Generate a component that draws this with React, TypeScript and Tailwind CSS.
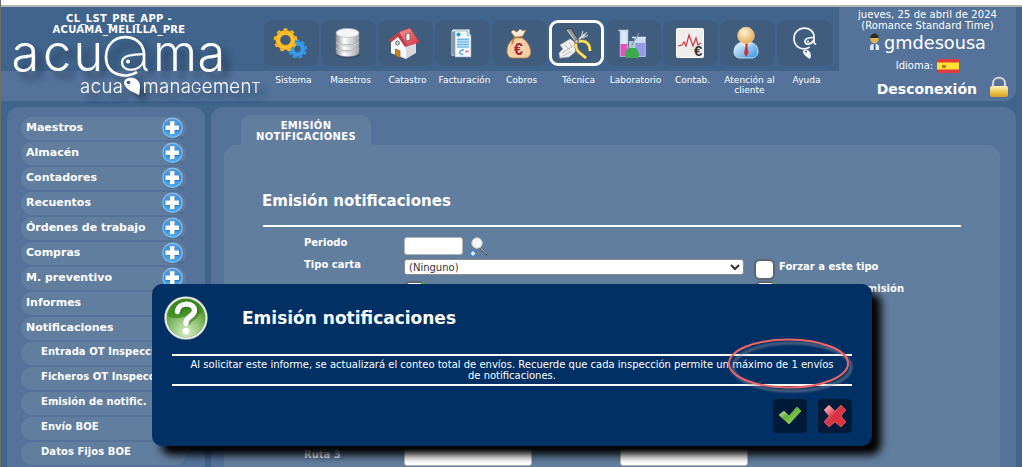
import React from 'react';

type IconProps = { children: React.ReactNode };

const Icon = ({ children }: IconProps) => (
  <svg width="36" height="36" viewBox="0 0 36 36" fill="none" className="mr-[3px] shrink-0">
    {children}
  </svg>
);

const Defs = () => (
  <svg width="0" height="0" className="absolute">
    <defs>
      <linearGradient id="metal" x1="0" x2="1">
        <stop offset="0" stopColor="#8d8f98" />
        <stop offset=".35" stopColor="#fff" />
        <stop offset="1" stopColor="#a3a4ab" />
      </linearGradient>
      <linearGradient id="redRoof" x1="0" y1="0" x2="1" y2="1">
        <stop offset="0" stopColor="#f39a9a" />
        <stop offset="1" stopColor="#d22f3e" />
      </linearGradient>
      <linearGradient id="shirt" x1="0" y1="0" x2="1" y2="1">
        <stop offset="0" stopColor="#f4fbff" />
        <stop offset="1" stopColor="#2f8fe0" />
      </linearGradient>
      <radialGradient id="skin" cx=".4" cy=".3" r=".7">
        <stop offset="0" stopColor="#fff3d6" />
        <stop offset="1" stopColor="#e3ac55" />
      </radialGradient>
      <linearGradient id="plus" x1="0" y1="0" x2="0" y2="1">
        <stop offset="0" stopColor="#5c9fdb" />
        <stop offset=".5" stopColor="#2f8ce0" />
        <stop offset="1" stopColor="#45b4ff" />
      </linearGradient>
      <radialGradient id="greenBall" cx=".5" cy=".85" r=".75">
        <stop offset="0" stopColor="#d8f0c8" />
        <stop offset=".55" stopColor="#86bb68" />
        <stop offset="1" stopColor="#3d8a20" />
      </radialGradient>
      <linearGradient id="check" x1="0" y1="0" x2="1" y2="1">
        <stop offset="0" stopColor="#f2fbe9" />
        <stop offset=".45" stopColor="#5eb13c" />
        <stop offset="1" stopColor="#c2ee62" />
      </linearGradient>
      <linearGradient id="cross" x1="0" y1="0" x2="1" y2="1">
        <stop offset="0" stopColor="#ffd5d8" />
        <stop offset=".45" stopColor="#d53546" />
        <stop offset="1" stopColor="#e8323c" />
      </linearGradient>
      <linearGradient id="gold" x1="0" y1="0" x2="0" y2="1">
        <stop offset="0" stopColor="#fff4c0" />
        <stop offset=".5" stopColor="#efca55" />
        <stop offset="1" stopColor="#d99d20" />
      </linearGradient>
    </defs>
  </svg>
);

const gearTeeth = [0, 40, 80, 120, 160, 200, 240, 280, 320];

const Gear = ({ cx, cy, r, color, edge }: { cx: number; cy: number; r: number; color: string; edge: string }) => (
  <g>
    {gearTeeth.map((a) => (
      <rect key={a} x={cx - 1.9} y={cy - r - 2.2} width="3.8" height="4" fill={color} transform={`rotate(${a} ${cx} ${cy})`} />
    ))}
    <circle cx={cx} cy={cy} r={r - 1.8} stroke={edge} strokeWidth="5" />
    <circle cx={cx} cy={cy} r={r - 1.8} stroke={color} strokeWidth="4" />
  </g>
);

const Sistema = () => (
  <Icon>
    <Gear cx={25.5} cy={24} r={7.2} color="#3b9be6" edge="#2577bd" />
    <Gear cx={13.5} cy={15} r={9.4} color="#fbc02a" edge="#d58f12" />
  </Icon>
);

const Maestros = () => (
  <Icon>
    <ellipse cx="19" cy="30" rx="12" ry="3" fill="#20354f" opacity=".5" />
    {[25, 19, 13].map((y) => (
      <g key={y}>
        <path d={`M7 ${y - 2}v4.500c0 5.500 23 5.500 23 0v-4.500z`} fill="url(#metal)" stroke="#85878f" strokeWidth=".5" />
        <ellipse cx="18.500" cy={y - 2} rx="11.500" ry="4" fill="#e6e6ea" stroke="#a5a6ae" strokeWidth=".4" />
      </g>
    ))}
    <path d="M7 8v5c0 5.500 23 5.500 23 0V8z" fill="url(#metal)" />
    <ellipse cx="18.500" cy="8" rx="11.500" ry="4.500" fill="#f5f5f7" stroke="#b5b6bd" strokeWidth=".7" />
  </Icon>
);

const Catastro = () => (
  <Icon>
    <path d="M5 17l9-8 6 11v14L5 28z" fill="#fafafa" />
    <path d="M20 20l10-2v10l-10 6z" fill="#d9d9dc" />
    <path d="M3 14.500L13 7l9 14-3 1-7-10-8 6z" fill="#b8424c" />
    <path d="M13 7l11-4 9.500 14L21 21z" fill="url(#redRoof)" stroke="#c12e3d" strokeWidth=".6" />
    <path d="M20 9l4-1v7l-4 1z" fill="#f3f3f3" stroke="#6b5151" strokeWidth=".7" />
    <circle cx="11.500" cy="18" r="2" fill="#bcd8ea" stroke="#555" strokeWidth=".8" />
    <path d="M9.500 24l4.500 2v7l-4.500-2.500z" fill="#c78925" stroke="#7b5316" strokeWidth=".7" />
  </Icon>
);

const Facturacion = () => (
  <Icon>
    <path d="M8 6l2-2h17v25l-2 2H8z" fill="#dce8ee" stroke="#445e70" strokeWidth=".8" />
    <path d="M8.500 6.500h5V32L8.500 29z" fill="#8299a8" />
    <path d="M12 6h12l4 4v22H12z" fill="#f4faff" stroke="#87a5b8" strokeWidth=".6" />
    <path d="M24 6v4.500h4" fill="#cfe3ef" stroke="#7fa5bd" strokeWidth=".6" />
    <path d="M14 13h12v10H14z" fill="#b4dcf3" />
    <circle cx="15.500" cy="9.500" r="2" fill="#1b9bdc" />
    <path d="M14 14.500h12M14 17h12M14 19.500h12M14 22h12" stroke="#6db9e4" strokeWidth="1" />
    <path d="M21 25c-5-1-6 5-1 4.500" stroke="#3ba8e0" strokeWidth="1.300" />
    <path d="M22 27l4-1" stroke="#e34848" strokeWidth="1" />
  </Icon>
);

const Cobros = () => (
  <Icon>
    <path d="M15 13C6 17 4 32 12 33h14c8-1 5-15-4-20z" fill="#f5cfa6" stroke="#bb7e4c" strokeWidth=".8" />
    <path d="M15 12l-4-5 2-2 4 2 3-3 3 2 3-1-4 7z" fill="#fbe9d6" stroke="#bb7e4c" strokeWidth=".6" />
    <path d="M13.500 13l9-1.500M14 13l-2 6" stroke="#b6813c" strokeWidth="1.600" />
    <text x="14" y="30" fontSize="16" fontWeight="bold" fill="#a82337" fontFamily="Liberation Sans, sans-serif">€</text>
  </Icon>
);

const Tecnica = () => (
  <Icon>
    <path d="M28 9L11 24" stroke="#dcdcdc" strokeWidth="1.800" />
    <path d="M24 13l2-7M25 13l5-6M26 13l5-3" stroke="#cdcdcd" strokeWidth="1.100" />
    <path d="M9 4l5-.5 8 12-3 3z" fill="#8f9296" stroke="#30343a" strokeWidth=".8" />
    <path d="M10 5l9 12" stroke="#e4e4e4" strokeWidth="1" />
    <path d="M3 20l10-6 6 4-1 9-6 5-9 1-1-5 4-4z" fill="#f0f0f0" stroke="#b5b5b5" strokeWidth=".7" />
    <path d="M5 28l11-7M6 31l9-5M8 20l5 5M12 17l3 5" stroke="#b9b9b9" strokeWidth=".9" />
    <path d="M20 17c6-2 13-1 13 9M19 18c-1 8 3 9 10 15" stroke="#b8921c" strokeWidth="3.400" />
    <path d="M20 17c6-2 13-1 13 9M19 18c-1 8 3 9 10 15" stroke="#ffe56b" strokeWidth="2.200" />
    <circle cx="19.500" cy="16.500" r="2" fill="#bdbdbd" stroke="#555" strokeWidth=".8" />
  </Icon>
);

const Laboratorio = () => (
  <Icon>
    <path d="M4.500 5.500h10M6.500 6v25h7V6" fill="#dce6f7" stroke="#c2d5ef" strokeWidth="1.400" />
    <path d="M6.500 19h7v12h-7z" fill="#e653b8" />
    <path d="M18 12.500h14M21 13v18h10V13" fill="#c8d8f6" stroke="#d5e2f6" strokeWidth="1.300" />
    <path d="M21 18h10v13H21z" fill="#9599e8" />
    <path d="M15 16h6v6l4 6c1 3-1 5-4 5h-6c-3 0-5-2-4-5l4-6z" fill="#c5e6da" opacity=".8" />
    <path d="M14 23h8l3 5c1 3-1 5-4 5h-6c-3 0-5-2-4-5z" fill="#3ba94e" />
    <path d="M18 20l7-12" stroke="#849bb2" strokeWidth="1.200" />
  </Icon>
);

const Contab = () => (
  <Icon>
    <rect x="5.500" y="3.500" width="27" height="29" rx="1" fill="#eeeeed" stroke="#fff" />
    <path d="M7 21l4-1 2-3 2 4 3-11 4 11 3-8 2 7 3-2" stroke="#cf3a47" strokeWidth="1.200" />
    <text x="23" y="31" fontSize="15" fontWeight="bold" fill="#343434" fontFamily="Liberation Sans, sans-serif">€</text>
  </Icon>
);

const Atencion = () => (
  <Icon>
    <path d="M6 27c0-7 4-10 12-10s12 3 12 10c0 3-3 6-6 6H12c-4 0-6-3-6-6z" fill="url(#shirt)" stroke="#d9f0ff" strokeWidth=".8" />
    <path d="M13 18h10l-5 5z" fill="#f7fbff" />
    <path d="M16.500 18h4l-1 3 1 7-2.500 4-2-4 1.500-7z" fill="#cf3035" />
    <circle cx="18" cy="10.500" r="8.300" fill="url(#skin)" stroke="#efcf91" strokeWidth=".8" />
  </Icon>
);

const Ayuda = () => (
  <Icon>
    <g stroke="#f7f8fa" strokeWidth="1.700" strokeLinecap="round">
      <path d="M24 22.500C17 26 9 22 9 13.500 9 0 29 0 29 12v4c0 2 .5 3 1.500 3" />
      <path d="M28.500 12.500c-4 0-8.500.5-8.500 4s5.500 4 8.500-1" />
    </g>
    <path d="M18 26c2-3 8-1 8 5l-1 3c-3-2-7-4-7-8z" fill="#f7f8fa" />
    <circle cx="21" cy="26.500" r="1" fill="#425f7f" />
    <circle cx="23" cy="16.500" r="1.100" fill="#f7f8fa" />
  </Icon>
);

const navItems = [
  { label: 'Sistema', icon: <Sistema /> },
  { label: 'Maestros', icon: <Maestros /> },
  { label: 'Catastro', icon: <Catastro /> },
  { label: 'Facturación', icon: <Facturacion /> },
  { label: 'Cobros', icon: <Cobros /> },
  { label: 'Técnica', icon: <Tecnica />, active: true },
  { label: 'Laboratorio', icon: <Laboratorio /> },
  { label: 'Contab.', icon: <Contab /> },
  { label: 'Atención al cliente', icon: <Atencion /> },
  { label: 'Ayuda', icon: <Ayuda /> },
];

const Logo = () => (
  <svg width="263" height="68" viewBox="0 0 263 68" className="block overflow-visible">
    <defs>
      <filter id="logoShadow" x="-10%" y="-10%" width="125%" height="140%">
        <feDropShadow dx="7" dy="7" stdDeviation="3" floodColor="#1c2f48" floodOpacity=".65" />
      </filter>
    </defs>
    <g filter="url(#logoShadow)" fill="#fff" fontFamily="Inter, sans-serif" fontWeight="300">
      <text x="10.500 42 72.500" y="35" fontSize="50.500">acu</text>
      <text x="152 196.500" y="35" fontSize="50.500">ma</text>
      <path d="M136 36c-10 7-31 4-31-15 0-26 37-26 38-3v10c0 4 1 6 3.500 6" fill="none" stroke="#fff" strokeWidth="2.600" />
      <path d="M143 18c-8 1-22 0-22 8.500 0 10 18 10 22-2" fill="none" stroke="#fff" strokeWidth="2.200" />
      <circle cx="127" cy="25.500" r="2" />
      <text x="79" y="57" fontSize="18.500" textLength="43">acua</text>
      <path d="M123 47c0-7 16-8 16 4l-1 8c-4-3-13-4-15-12z" />
      <circle cx="127.500" cy="46.500" r="1.800" fill="#3c5b82" />
      <text x="141.500" y="57" fontSize="18.500" textLength="118">
        mana<tspan fontSize="14">G</tspan>emen<tspan fontSize="14">T</tspan>
      </text>
    </g>
  </svg>
);

const Header = () => (
  <header className="flex h-[94px] shrink-0">
    <div className="flex w-[838px] shrink-0 bg-[linear-gradient(#40648c_64px,#54729a_64px)]">
      <div className="w-[263px] shrink-0 pt-[6px]">
        <p className="h-[23px] w-[236px] text-center text-[10px] leading-[11px] font-bold tracking-[0.3px]">
          CL_LST_PRE_APP -<br />ACUAMA_MELILLA_PRE
        </p>
        <Logo />
      </div>
      <nav className="flex gap-[2px] pt-[13px]">
        {navItems.map((item) => (
          <a key={item.label} className="flex w-[55px] flex-col items-center">
            <span
              className={
                item.active
                  ? 'flex h-[46px] w-[55px] items-center justify-center rounded-[9px] border-[3px] border-white bg-[#405d7e]'
                  : 'flex h-[46px] w-[55px] items-center justify-center rounded-[9px] bg-[#405d7e]'
              }
            >
              {item.icon}
            </span>
            <span className="mt-[9px] ml-[4px] w-[60px] text-center text-[9px] leading-[10px]">{item.label}</span>
          </a>
        ))}
      </nav>
    </div>
    <div className="flex w-[177px] flex-col items-center rounded-br-[12px] bg-[#54729a] pt-[2px]">
      <p className="text-center text-[10px] leading-[11px] tracking-[0.08px] whitespace-nowrap">
        jueves, 25 de abril de 2024<br />(Romance Standard Time)
      </p>
      <div className="flex h-[24px] items-center gap-[4px]">
        <svg width="11" height="18" viewBox="0 0 11 18" className="mb-[3px]">
          <circle cx="5.500" cy="6" r="4.200" fill="#e2b64c" />
          <path d="M1.200 5c0-6 8.600-6 8.600 0z" fill="#302c28" />
          <path d="M1 17v-4c1-3 8-3 9 0v4z" fill="#d9e8f4" />
          <path d="M4.800 11h1.600v6H4.800z" fill="#294c70" />
        </svg>
        <span className="text-[17.700px] leading-[22px]">gmdesousa</span>
      </div>
      <div className="mt-[4px] flex h-[14px] items-center gap-[4px]">
        <span className="text-[10px] leading-[14px]">Idioma:</span>
        <svg width="22" height="14" viewBox="0 0 22 14">
          <path d="M0 0h22v14H0z" fill="#e23a3c" />
          <path d="M0 3.500h22v7H0z" fill="#ffe22d" />
          <path d="M5 6h4v3H5z" fill="#c5703c" />
        </svg>
      </div>
      <div className="mt-[2px] flex h-[24px] w-full items-center justify-end gap-[12px] pr-[7px]">
        <span className="pt-[4px] text-[14px] leading-[18px] font-bold">Desconexión</span>
        <svg width="20" height="22" viewBox="0 0 20 22" className="mb-[1px]">
          <path d="M4 12V7C4 0 16 0 16 7v5" fill="none" stroke="#7e8895" strokeWidth="3" />
          <path d="M4 12V7C4 0 16 0 16 7v5" fill="none" stroke="#dfe3e8" strokeWidth="1.600" />
          <rect x="1" y="10" width="18" height="11" rx="2" fill="url(#gold)" />
        </svg>
      </div>
    </div>
  </header>
);

const PlusIcon = () => (
  <svg width="23" height="23" viewBox="0 0 23 23" className="mr-[2px]">
    <path d="M5 19h17v3H8z" fill="#3d5878" opacity=".35" />
    <circle cx="11.500" cy="10.800" r="9.700" fill="url(#plus)" stroke="#8cbde9" strokeWidth="1.200" />
    <path d="M10 6h4v4h4v4h-4v4h-4v-4H6v-4h4z" fill="#24496e" opacity=".45" />
    <path d="M9 4.300h4.500v4.200H18V13h-4.500v4.200H9V13H4.500V8.500H9z" fill="#fff" />
  </svg>
);

const menu = ['Maestros', 'Almacén', 'Contadores', 'Recuentos', 'Órdenes de trabajo', 'Compras', 'M. preventivo', 'Informes', 'Notificaciones'];
const submenu = ['Entrada OT Inspecciones', 'Ficheros OT Inspecciones', 'Emisión de notific.', 'Envío BOE', 'Datos Fijos BOE'];

const Sidebar = () => (
  <aside className="flex w-[198px] shrink-0 flex-col gap-[2px] rounded-t-[12px] bg-[#54729a] pt-[10px] pl-[14px]">
    {menu.map((label) => (
      <div key={label} className="flex h-[23px] w-[165px] shrink-0 justify-between rounded-[11px] bg-[#627e9e] pl-[5px]">
        <span className="text-[11px] leading-[21px] font-bold whitespace-nowrap">{label}</span>
        <PlusIcon />
      </div>
    ))}
    {submenu.map((label) => (
      <div key={label} className="h-[23px] w-[165px] shrink-0 overflow-hidden rounded-[11px] bg-[#627e9e] pl-[20px] text-[10px] leading-[19px] font-bold tracking-[0.05px] whitespace-nowrap">
        {label}
      </div>
    ))}
  </aside>
);

const CheckedBox = () => (
  <span className="flex h-[21px] w-[21px] items-center justify-center rounded-[6px] border-2 border-[#5b6571] bg-white">
    <svg width="17" height="17" viewBox="0 0 17 17" className="overflow-visible">
      <path d="M4 9l4 5L18-1" fill="none" stroke="#3fbf3f" strokeWidth="2" />
    </svg>
  </span>
);

const Content = () => (
  <main className="flex w-[805px] shrink-0 flex-col rounded-t-[12px] bg-[#54729a] pt-[8px] pl-[13px]">
    <div className="ml-[17px] h-[30px] w-[130px] shrink-0 rounded-t-[10px] bg-[#627e9e] pt-[5px] text-center text-[10px] leading-[11px] font-bold tracking-[0.35px]">
      EMISIÓN<br />NOTIFICACIONES
    </div>
    <section className="flex h-[330px] w-[776px] shrink-0 flex-col rounded-t-[12px] bg-[#627e9e] pt-[46px] pl-[38px]">
      <h1 className="h-[34px] w-[699px] shrink-0 text-[15px] leading-[21px] font-bold">Emisión notificaciones</h1>
      <div className="ml-px h-[2px] w-[698px] shrink-0 bg-white" />
      <div className="flex h-[30px] shrink-0 pt-[10px] pl-[42px] text-[10px] font-bold">
        <span className="w-[100px] leading-[12px]">Periodo</span>
        <span className="h-[18px] w-[59px] rounded-[3px] border border-[#b6b6b6] bg-white" />
        <svg width="20" height="20" viewBox="0 0 20 20" className="ml-[6px]">
          <path d="M11 10l7 8" stroke="#4d5258" strokeWidth="2.200" />
          <path d="M11 10l6.500 7" stroke="#c4c6ca" strokeWidth="1" />
          <circle cx="8" cy="6" r="5.200" fill="#f6f6f6" stroke="#c9cdd2" />
          <circle cx="4" cy="16.500" r="3" fill="#3f8bd0" />
          <path d="M4 14.500v4M2 16.500h4" stroke="#fff" strokeWidth="1.500" />
        </svg>
      </div>
      <div className="flex h-[22px] shrink-0 pt-[2px] pl-[42px] text-[10px] font-bold">
        <span className="w-[100px] leading-[12px]">Tipo carta</span>
        <span className="flex h-[16px] w-[340px] items-center justify-between rounded-[3px] border border-[#8a8a8a] bg-white pr-[3px] pl-[4px] font-normal text-[#333]">
          (Ninguno)
          <svg width="10" height="7" viewBox="0 0 10 7">
            <path d="M1 1l4 4 4-4" fill="none" stroke="#333" strokeWidth="2" />
          </svg>
        </span>
        <span className="ml-[10px] h-[21px] w-[21px] rounded-[6px] border-2 border-[#5b6571] bg-white" />
        <span className="pl-[4px] leading-[16px]">Forzar a este tipo</span>
      </div>
      <div className="flex h-[23px] shrink-0 pt-[2px] pl-[142px]">
        <CheckedBox />
        <span className="w-[330px]" />
        <CheckedBox />
        <span className="w-[128px] text-right text-[10px] leading-[16px] font-bold">emisión</span>
      </div>
      <div className="mt-[147px] flex h-[20px] shrink-0 pl-[42px]">
        <span className="w-[100px] text-[10px] leading-[12px] font-bold">Ruta 3</span>
        <span className="h-[17px] w-[128px] rounded-[3px] border border-[#b6b6b6] bg-white" />
        <span className="ml-[88px] h-[17px] w-[128px] rounded-[3px] border border-[#b6b6b6] bg-white" />
      </div>
    </section>
  </main>
);

const Dialog = () => (
  <div className="absolute top-[284px] left-[151px] h-[162px] w-[720px] rounded-[10px] bg-[#003064] px-[20px] shadow-[9px_9px_9px_#000]">
    <div className="-ml-[8px] flex h-[70px] items-center pb-[2px]">
      <svg width="44" height="44" viewBox="0 0 44 44">
        <circle cx="22" cy="22" r="20.500" fill="url(#greenBall)" stroke="#8e9c8d" strokeWidth="2.500" />
        <circle cx="22" cy="22" r="20.400" fill="none" stroke="#e8ece8" strokeWidth="1.800" />
        <path d="M4 20C6 7 18 3 29 6c9 3 10 9 7 12-10-1-22 8-32 2z" fill="#2f8414" opacity=".7" />
        <path d="M14 17c0-11 17-10 17-1 0 6-9 5-8.500 12" fill="none" stroke="#31621f" strokeWidth="5.500" opacity=".5" transform="translate(1 1)" />
        <path d="M13.500 15.500c1-10 17-9.500 17-1 0 6-9 5.500-8.500 13" fill="none" stroke="#fff" strokeWidth="5.300" strokeLinecap="round" />
        <circle cx="22" cy="35" r="3.300" fill="#fff" />
      </svg>
      <h2 className="ml-[34px] text-[17px] leading-[20px] font-bold">Emisión notificaciones</h2>
    </div>
    <p className="h-[32px] border-y-2 border-white pt-[3px] text-center text-[10px] leading-[11px] whitespace-nowrap">
      Al solicitar este informe, se actualizará el conteo total de envíos. Recuerde que cada inspección permite un máximo de 1 envíos<br />
      de notificaciones.
    </p>
    <div className="mt-[13px] flex justify-end gap-[11px]">
      <button className="flex h-[34px] w-[34px] items-center justify-center rounded-[4px] bg-[#001b3a]">
        <svg width="24" height="22" viewBox="0 0 24 22">
          <path d="M1 10l5-4 5 5 8-9 4 4-12 13z" fill="url(#check)" stroke="#93c66c" strokeWidth=".7" />
        </svg>
      </button>
      <button className="flex h-[34px] w-[34px] items-center justify-center rounded-[4px] bg-[#001b3a]">
        <svg width="24" height="24" viewBox="0 0 24 24">
          <path d="M6 1l6 6 6-6 5 5-5 6 5 6-5 5-6-5-6 5-5-5 5-6-5-6z" fill="url(#cross)" stroke="#d96670" strokeWidth=".7" />
        </svg>
      </button>
    </div>
    <svg width="130" height="62" viewBox="0 0 130 62" className="absolute top-[50px] left-[572px]">
      <ellipse cx="68" cy="33" rx="59" ry="24" fill="none" stroke="#8d8b9b" strokeWidth="3" opacity=".55" className="blur-[1px]" />
      <ellipse cx="64.500" cy="29.500" rx="59.500" ry="24" fill="none" stroke="#f06466" strokeWidth="2" />
    </svg>
  </div>
);

export default function App() {
  return (
    <div className="relative flex h-[467px] w-[1022px] flex-col overflow-hidden border-l border-[#6d6d6d] bg-[#40648c] font-['DejaVu_Sans',Verdana,sans-serif] text-white">
      <Defs />
      <div className="h-[7px] shrink-0 border-b-2 border-[#b5b5b5] bg-white" />
      <Header />
      <div className="mt-[6px] flex min-h-0 flex-1 gap-[6px] pl-[6px]">
        <Sidebar />
        <Content />
      </div>
      <Dialog />
    </div>
  );
}
